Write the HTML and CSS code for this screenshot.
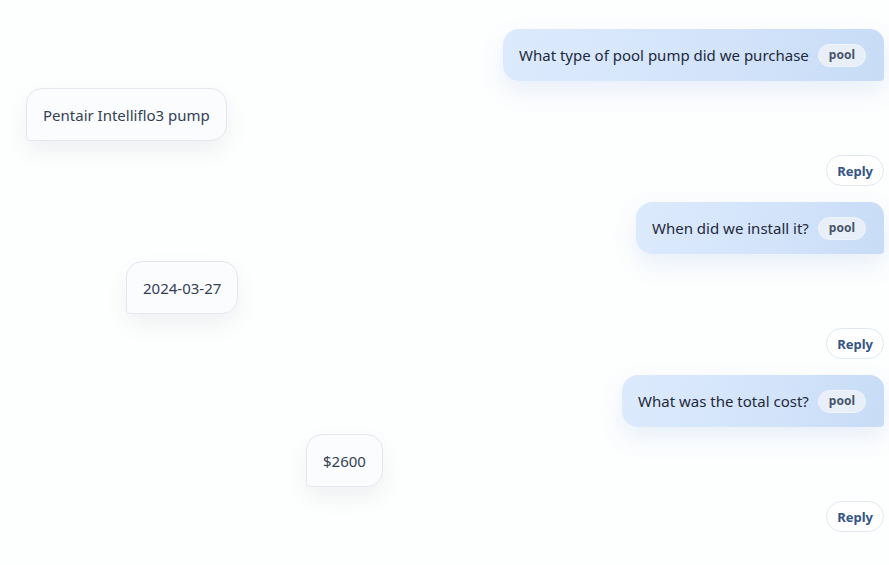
FILE: index.html
```html
<!DOCTYPE html>
<html lang="en">
<head>
<meta charset="utf-8">
<title>Pool chat</title>
<link rel="stylesheet" href="styles.css">
</head>
<body>
<main class="thread">
  <section class="turn">
    <div class="row row-user">
      <div class="bubble bubble-user">
        <span class="msg">What type of pool pump did we purchase</span>
        <span class="tag">pool</span>
      </div>
    </div>
    <div class="row row-bot offset-1">
      <div class="bubble bubble-bot">Pentair Intelliflo3 pump</div>
    </div>
    <div class="row row-user">
      <button class="reply">Reply</button>
    </div>
  </section>
  <section class="turn">
    <div class="row row-user">
      <div class="bubble bubble-user">
        <span class="msg">When did we install it?</span>
        <span class="tag">pool</span>
      </div>
    </div>
    <div class="row row-bot offset-2">
      <div class="bubble bubble-bot">2024-03-27</div>
    </div>
    <div class="row row-user">
      <button class="reply">Reply</button>
    </div>
  </section>
  <section class="turn">
    <div class="row row-user">
      <div class="bubble bubble-user">
        <span class="msg">What was the total cost?</span>
        <span class="tag">pool</span>
      </div>
    </div>
    <div class="row row-bot offset-3">
      <div class="bubble bubble-bot">$2600</div>
    </div>
    <div class="row row-user">
      <button class="reply">Reply</button>
    </div>
  </section>
</main>
</body>
</html>
```

FILE: styles.css
```css
* { box-sizing: border-box; }
html, body { margin: 0; padding: 0; background: #fdfefe; }
body {
  font-family: "Noto Sans", "Segoe UI", sans-serif;
  color: #1e293b;
  overflow: hidden;
}
.thread {
  display: flex;
  flex-direction: column;
  gap: 16px;
  padding: 29px 5px 0 26px;
}
.turn {
  display: flex;
  flex-direction: column;
}
.row { display: flex; }
.row-user { justify-content: flex-end; }
.row-bot { justify-content: flex-start; margin-top: 7px; margin-bottom: 14px; }
.offset-1 { padding-left: 0; }
.offset-2 { padding-left: 100px; }
.offset-3 { padding-left: 280px; }

.bubble {
  font-size: 15px;
  line-height: 24px;
}
.bubble-user {
  display: flex;
  align-items: center;
  gap: 9px;
  height: 52px;
  padding: 0 18px 0 16px;
  background: linear-gradient(100deg, #dceafd 0%, #d2e3fa 60%, #c8dcf6 100%);
  border-radius: 16px 14px 4px 16px;
  box-shadow: 0 10px 24px rgba(96, 140, 220, 0.13);
  color: #1e293b;
}
.tag {
  display: inline-flex;
  align-items: center;
  height: 23px;
  padding: 0 10px;
  border-radius: 12px;
  background: #e8eff9;
  border: 1px solid #f1f5fb;
  font-size: 12px;
  font-weight: 700;
  color: #475569;
}
.bubble-bot {
  height: 53px;
  padding: 14px 16px 13px;
  background: #fbfcfe;
  border: 1px solid #e3e8f0;
  border-radius: 16px 16px 16px 4px;
  box-shadow: 0 10px 24px rgba(15, 23, 42, 0.06);
  color: #334155;
}
.reply {
  font-family: inherit;
  height: 31px;
  padding: 0 10px;
  background: #ffffff;
  border: 1px solid #e2e8f0;
  border-radius: 16px;
  font-size: 13px;
  font-weight: 700;
  color: #34548a;
  cursor: pointer;
}
```
